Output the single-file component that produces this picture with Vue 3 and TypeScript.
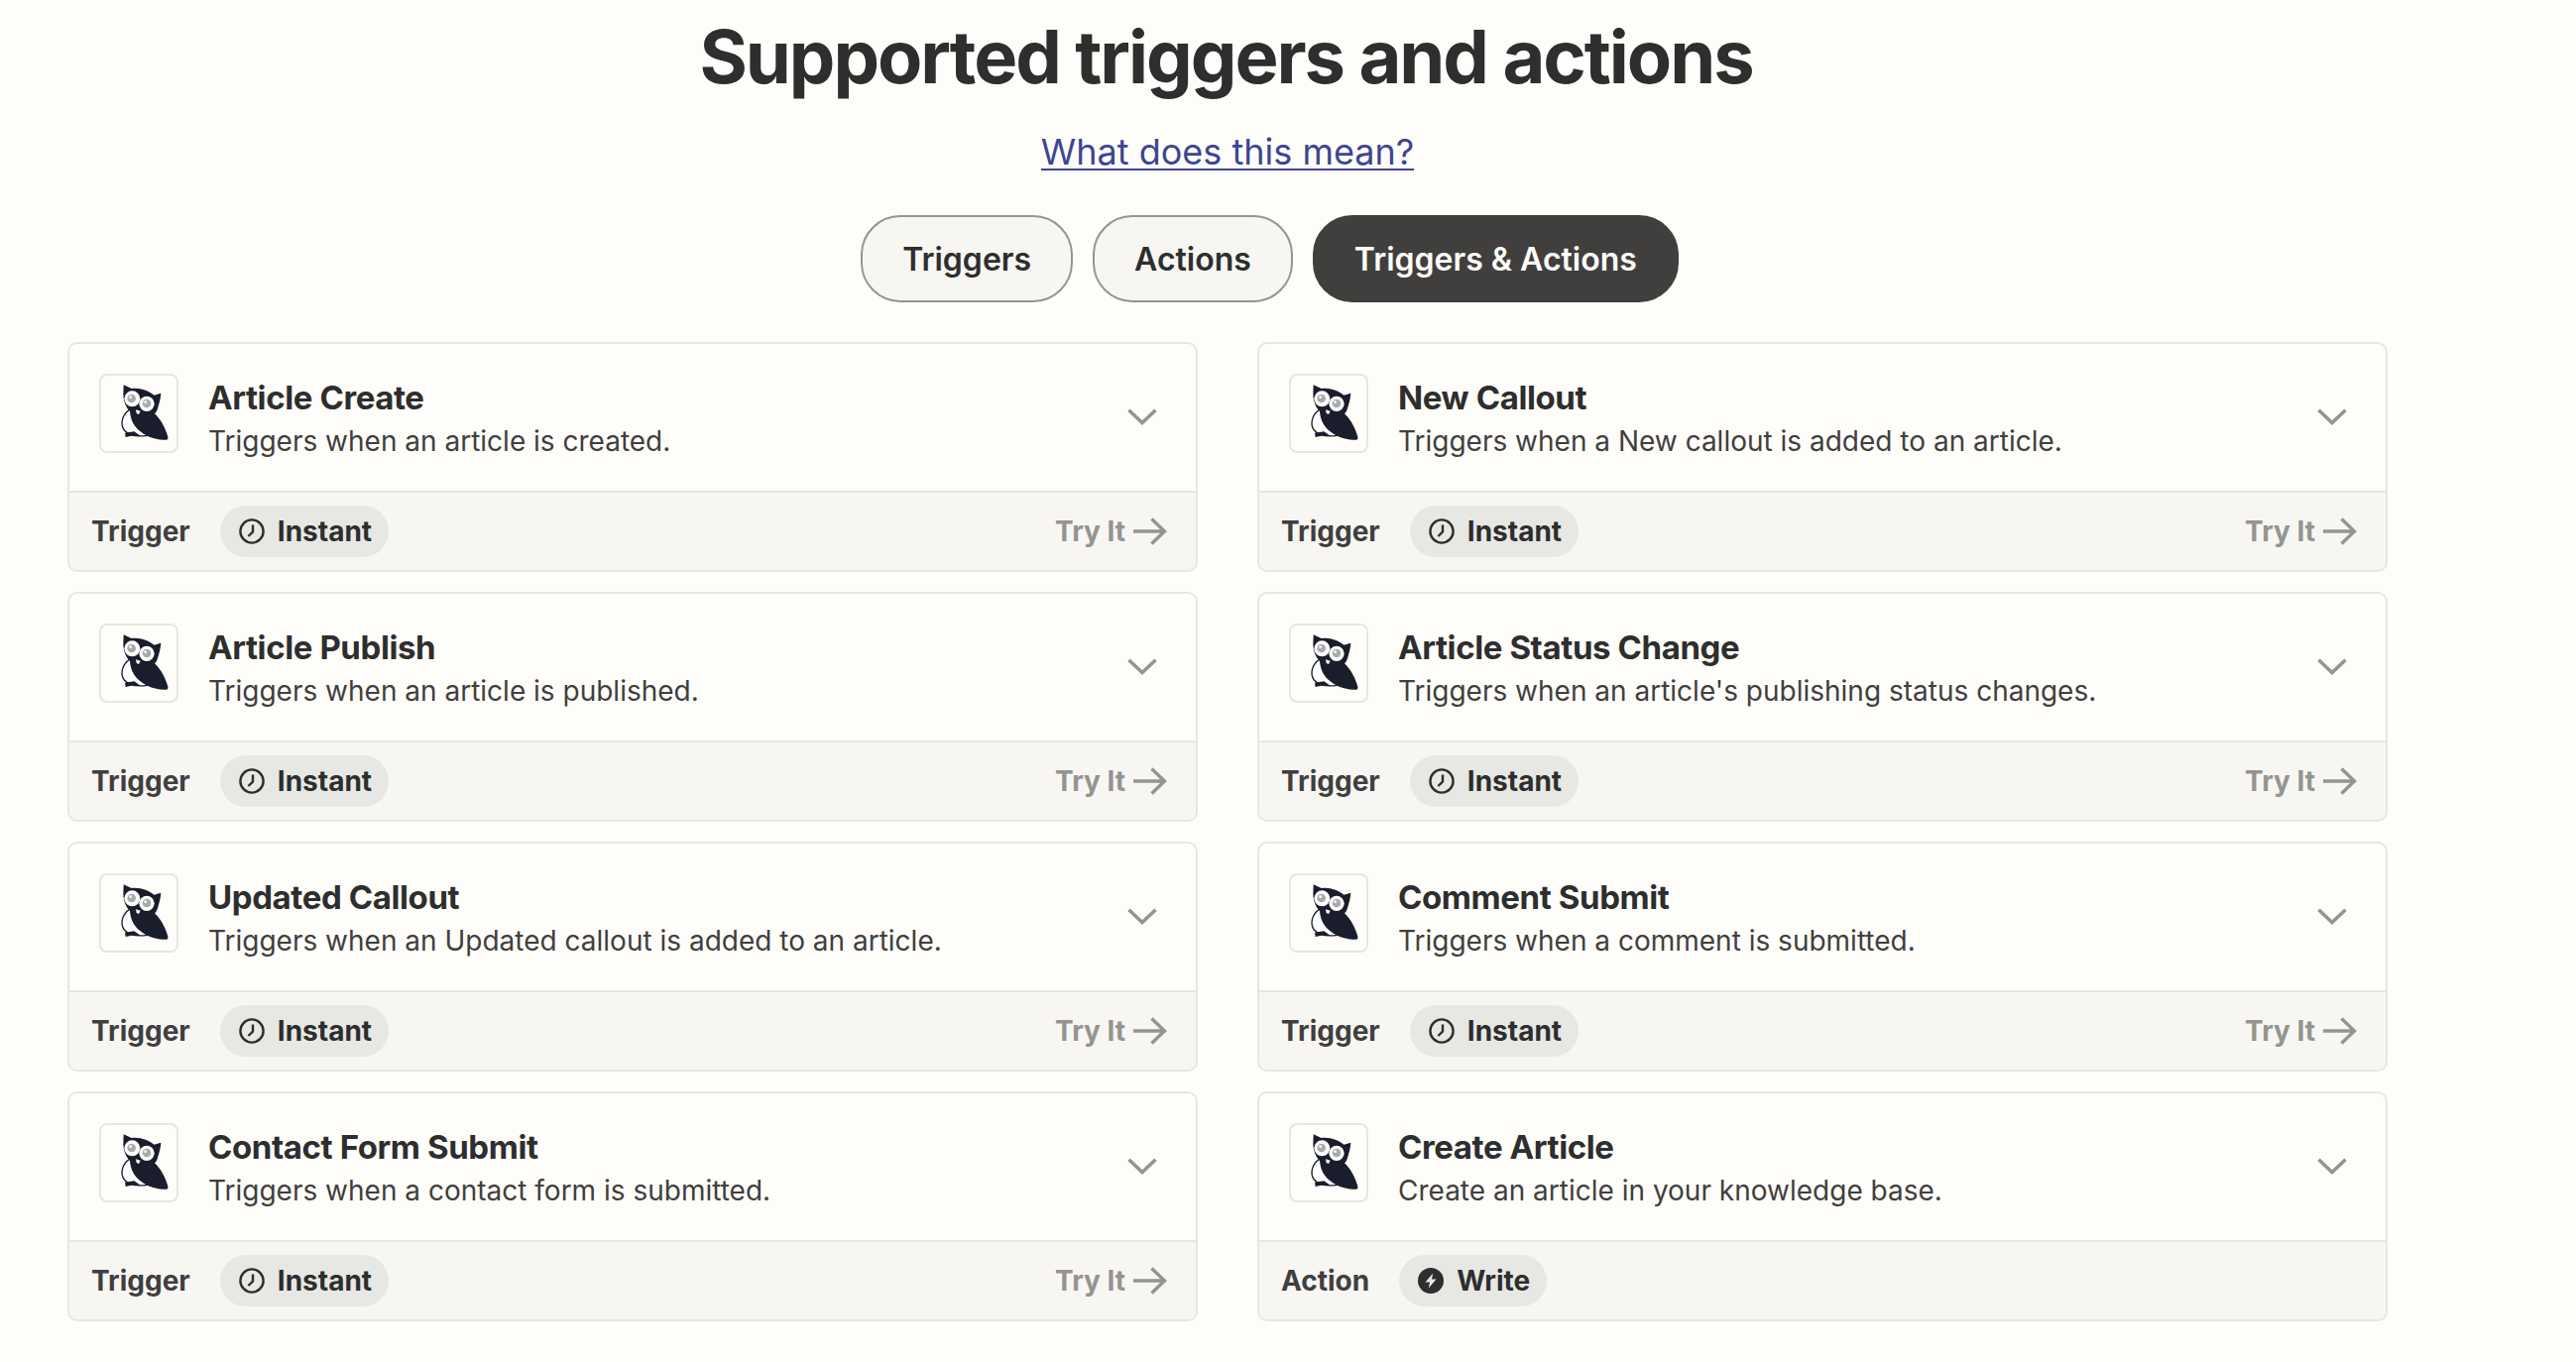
<script setup lang="ts">
interface Item {
  title: string
  desc: string
  kind: 'Trigger' | 'Action'
}
const tabs = ['Triggers', 'Actions', 'Triggers & Actions']
const items: Item[] = [
  { title: 'Article Create', desc: 'Triggers when an article is created.', kind: 'Trigger' },
  { title: 'New Callout', desc: 'Triggers when a New callout is added to an article.', kind: 'Trigger' },
  { title: 'Article Publish', desc: 'Triggers when an article is published.', kind: 'Trigger' },
  { title: 'Article Status Change', desc: "Triggers when an article's publishing status changes.", kind: 'Trigger' },
  { title: 'Updated Callout', desc: 'Triggers when an Updated callout is added to an article.', kind: 'Trigger' },
  { title: 'Comment Submit', desc: 'Triggers when a comment is submitted.', kind: 'Trigger' },
  { title: 'Contact Form Submit', desc: 'Triggers when a contact form is submitted.', kind: 'Trigger' },
  { title: 'Create Article', desc: 'Create an article in your knowledge base.', kind: 'Action' }
]
</script>

<template>
  <main class="page">
    <h1 class="heading">Supported triggers and actions</h1>
    <a class="link" href="#">What does this mean?</a>
    <div class="tabs">
      <button
        v-for="(tab, i) in tabs"
        :key="tab"
        class="tab"
        :class="{ active: i === 2 }"
        type="button"
      >{{ tab }}</button>
    </div>
    <section class="grid">
      <article v-for="item in items" :key="item.title" class="card">
        <div class="head">
          <div class="logo">
            <svg viewBox="36 43 228 228" width="76" height="76" aria-hidden="true">
              <path fill="#fff" stroke="#1a1d2b" stroke-width="4" d="M122 146C100 160 92 190 106 208C120 224 148 228 176 224L150 170Z" />
              <path fill="#1a1d2b" d="M108 216L136 212L156 226L128 225L110 229Z" />
              <path fill="#1a1d2b" d="M104 71L128 82C152 78 180 88 196 102L217 96C216 112 212 124 209 135C206 146 204 152 198 158C218 176 232 206 238 228C240 236 234 239 224 237C196 236 170 226 150 208C132 192 124 170 123 150C111 140 104 122 103 100Z" />
              <circle cx="130" cy="113" r="24" fill="#fff" />
              <circle cx="174" cy="128" r="23" fill="#fff" />
              <circle cx="128" cy="112" r="13" fill="#a9abab" />
              <circle cx="174" cy="127" r="13" fill="#a9abab" />
              <circle cx="125" cy="108" r="4" fill="#fff" />
              <circle cx="170" cy="123" r="4" fill="#fff" />
              <path fill="#fff" d="M141 146L155 150L150 160L143 157Z" />
            </svg>
          </div>
          <div class="text">
            <h3 class="title">{{ item.title }}</h3>
            <p class="desc">{{ item.desc }}</p>
          </div>
          <svg class="chevron" viewBox="0 0 30 18" width="30" height="18" aria-hidden="true">
            <path d="M1.5 1.8L15 14.5L28.5 1.8" fill="none" stroke="currentColor" stroke-width="3.6" />
          </svg>
        </div>
        <div class="foot">
          <span class="kind">{{ item.kind }}</span>
          <span class="pill">
            <svg v-if="item.kind === 'Trigger'" viewBox="0 0 26 26" width="26" height="26" aria-hidden="true">
              <circle cx="13" cy="13" r="11.6" fill="none" stroke="currentColor" stroke-width="2.4" />
              <path d="M14 6.5V13.6L9.4 18" fill="none" stroke="currentColor" stroke-width="2.4" />
            </svg>
            <svg v-else viewBox="0 0 26 26" width="26" height="26" aria-hidden="true">
              <circle cx="13" cy="13" r="13" fill="currentColor" />
              <path d="M15.2 5.5L7.5 14.4H12L10.8 20.5L18.5 11.6H14Z" fill="#e7e8e4" />
            </svg>
            {{ item.kind === 'Trigger' ? 'Instant' : 'Write' }}
          </span>
          <span v-if="item.kind === 'Trigger'" class="try">
            Try It
            <svg viewBox="0 0 34 28" width="34" height="28" aria-hidden="true">
              <path d="M0 14H31M18.5 1.5L31.5 14L18.5 26.5" fill="none" stroke="currentColor" stroke-width="3.4" />
            </svg>
          </span>
        </div>
      </article>
    </section>
  </main>
</template>

<style scoped>
.page {
  box-sizing: border-box;
  width: 2598px;
  min-height: 1374px;
  padding: 0 190px 0 68px;
  display: flex;
  flex-direction: column;
  align-items: center;
  background: #fffdf9;
  color: #2d2e2e;
  font-family: Inter, "Noto Sans", sans-serif;
}
.heading {
  margin: 0 3px 0 0;
  height: 116px;
  font-size: 74px;
  line-height: 114px;
  font-weight: 700;
  letter-spacing: -2.05px;
  white-space: nowrap;
}
.link {
  margin-top: 13px;
  font-size: 36px;
  line-height: 48px;
  color: #3d4592;
  text-decoration: underline;
  text-decoration-thickness: 2px;
  text-underline-offset: 4px;
}
.tabs {
  margin-top: 40px;
  margin-left: 85px;
  display: flex;
  gap: 20px;
}
.tab {
  box-sizing: border-box;
  height: 88px;
  padding: 0 40px;
  border: 2px solid #95948f;
  border-radius: 40px;
  background: #f7f6f3;
  color: #2d2e2e;
  font-family: inherit;
  font-size: 32px;
  font-weight: 600;
}
.tab.active {
  border-color: #403f3e;
  background: #403f3e;
  color: #fffdf9;
}
.grid {
  width: 100%;
  margin-top: 40px;
  display: grid;
  grid-template-columns: 1140px 1140px;
  column-gap: 60px;
  row-gap: 20px;
}
.card {
  box-sizing: border-box;
  height: 232px;
  display: flex;
  flex-direction: column;
  border: 2px solid #e7e6e1;
  border-radius: 10px;
  overflow: hidden;
}
.head {
  box-sizing: border-box;
  height: 150px;
  padding: 0 39px 0 30px;
  display: flex;
  align-items: center;
  gap: 30px;
  border-bottom: 2px solid #e7e6e1;
}
.logo {
  box-sizing: border-box;
  flex: none;
  align-self: flex-start;
  margin-top: 30px;
  width: 80px;
  height: 80px;
  border: 2px solid #e7e6e1;
  border-radius: 8px;
  overflow: hidden;
  background: #fffdf9;
}
.logo svg {
  display: block;
}
.text {
  flex: 1;
  min-width: 0;
  padding-top: 4px;
}
.title {
  margin: 0;
  font-size: 33px;
  line-height: 44px;
  font-weight: 700;
  letter-spacing: -0.4px;
}
.desc {
  margin: 0;
  font-size: 28px;
  line-height: 44px;
  color: #403f3e;
}
.chevron {
  flex: none;
  color: #95948f;
}
.foot {
  flex: 1;
  padding: 0 29px 0 22px;
  display: flex;
  align-items: center;
  background: #f7f6f3;
}
.kind {
  font-size: 28px;
  font-weight: 700;
  color: #403f3e;
}
.pill {
  margin-left: 30px;
  height: 52px;
  padding: 0 17px 0 19px;
  display: inline-flex;
  align-items: center;
  gap: 13px;
  border-radius: 26px;
  background: #e7e8e4;
  font-size: 28px;
  font-weight: 700;
  color: #2d2e2e;
}
.try {
  margin-left: auto;
  display: inline-flex;
  align-items: center;
  gap: 8px;
  font-size: 28px;
  font-weight: 700;
  color: #95948f;
}
</style>

<style>
html, body {
  margin: 0;
  background: #fffdf9;
}
</style>
